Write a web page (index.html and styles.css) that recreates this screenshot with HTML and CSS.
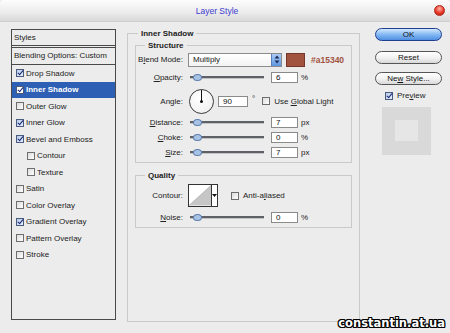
FILE: index.html
```html
<!DOCTYPE html>
<html lang="en">
<head>
    <meta charset="UTF-8">
    <meta name="viewport" content="width=device-width, initial-scale=1.0">
    <title>Layer Style</title>
    <link rel="stylesheet" href="styles.css">
</head>
<body>
<div class="window">
    <div class="titlebar">
        <span class="title">Layer Style</span>
        <span class="close"></span>
    </div>

    <div class="dialog">
        <div class="styles-panel">
            <div class="panel-head">Styles</div>
            <div class="panel-blend">Blending Options: Custom</div>
            <ul class="style-list">
                <li><span class="cb on"></span>Drop Shadow</li>
                <li class="active"><span class="cb on"></span>Inner Shadow</li>
                <li><span class="cb"></span>Outer Glow</li>
                <li><span class="cb on"></span>Inner Glow</li>
                <li><span class="cb on"></span>Bevel and Emboss</li>
                <li class="sub"><span class="cb"></span>Contour</li>
                <li class="sub"><span class="cb"></span>Texture</li>
                <li><span class="cb"></span>Satin</li>
                <li><span class="cb"></span>Color Overlay</li>
                <li><span class="cb on"></span>Gradient Overlay</li>
                <li><span class="cb"></span>Pattern Overlay</li>
                <li><span class="cb"></span>Stroke</li>
            </ul>
        </div>

        <fieldset class="group main-group">
            <legend>Inner Shadow</legend>

            <fieldset class="group inner-group structure">
                <legend>Structure</legend>
                <div class="row row-blend">
                    <span class="lbl">B<u>l</u>end Mode:</span>
                    <div class="select">
                        <span class="select-text">Multiply</span>
                        <span class="spin">
                            <svg width="6" height="9" viewBox="0 0 6 9"><path d="M3 0.5L5.5 3.5H0.5Z M3 8.5L5.5 5.5H0.5Z" fill="#1d2a55"/></svg>
                        </span>
                    </div>
                    <span class="swatch"></span>
                    <span class="hex">#a15340</span>
                </div>
                <div class="row row-opacity">
                    <span class="lbl"><u>O</u>pacity:</span>
                    <span class="slider"></span>
                    <span class="num">6</span>
                    <span class="unit">%</span>
                </div>
                <div class="row row-angle">
                    <span class="lbl">Angle:</span>
                    <span class="dial"></span>
                    <span class="num wide">90</span>
                    <span class="deg">°</span>
                    <span class="cb global"></span>
                    <span class="cb-text">Use <u>G</u>lobal Light</span>
                </div>
                <div class="row row-small">
                    <span class="lbl"><u>D</u>istance:</span>
                    <span class="slider"></span>
                    <span class="num">7</span>
                    <span class="unit">px</span>
                </div>
                <div class="row row-small">
                    <span class="lbl"><u>C</u>hoke:</span>
                    <span class="slider"></span>
                    <span class="num">0</span>
                    <span class="unit">%</span>
                </div>
                <div class="row row-small">
                    <span class="lbl"><u>S</u>ize:</span>
                    <span class="slider"></span>
                    <span class="num">7</span>
                    <span class="unit">px</span>
                </div>
            </fieldset>

            <fieldset class="group inner-group quality">
                <legend>Quality</legend>
                <div class="row row-contour">
                    <span class="lbl">Contour:</span>
                    <div class="contour">
                        <svg class="curve" width="23" height="21" viewBox="0 0 23 21">
                            <rect width="23" height="21" fill="#fff"/>
                            <polygon points="0,21 23,0 23,21" fill="#c6c6c6"/>
                            <line x1="0" y1="21" x2="23" y2="0" stroke="#9a9a9a" stroke-width="0.6"/>
                        </svg>
                        <span class="contour-arrow">
                            <svg width="5" height="3" viewBox="0 0 5 3"><path d="M0 0H5L2.5 3Z" fill="#111"/></svg>
                        </span>
                    </div>
                    <span class="cb anti"></span>
                    <span class="cb-text">Anti-a<u>l</u>iased</span>
                </div>
                <div class="row row-noise">
                    <span class="lbl"><u>N</u>oise:</span>
                    <span class="slider"></span>
                    <span class="num">0</span>
                    <span class="unit">%</span>
                </div>
            </fieldset>
        </fieldset>

        <div class="actions">
            <div class="btn btn-ok">OK</div>
            <div class="btn btn-reset">Reset</div>
            <div class="btn btn-new">Ne<u>w</u> Style...</div>
            <div class="preview-check"><span class="cb on"></span><span>Pre<u>v</u>iew</span></div>
            <div class="preview-box"><span class="preview-swatch"></span></div>
        </div>
    </div>

    <div class="watermark">constantin.at.ua</div>
</div>
</body>
</html>
```

FILE: styles.css
```css
* {
    box-sizing: border-box;
}
body {
    margin: 0;
    background: #ececec;
    font-family: "Liberation Sans", Arial, sans-serif;
    font-size: 8px;
    color: #222;
}
.window {
    position: relative;
    width: 450px;
    height: 333px;
    overflow: hidden;
    background: #ececec;
}

/* title bar */
.titlebar {
    height: 22px;
    display: flex;
    align-items: center;
    background: linear-gradient(#fdfdfd, #ededed 55%, #d9d9d9);
    border-bottom: 1px solid #cfcfcf;
    border-radius: 4px 4px 0 0;
}
.title {
    flex: 1;
    text-align: center;
    color: #3c3ccf;
    font-size: 8.5px;
}
.close {
    width: 11px;
    height: 11px;
    margin-right: 5px;
    border-radius: 50%;
    border: 1px solid #b02418;
    background: radial-gradient(circle at 50% 30%, #ffb4a8, #e8392a 55%, #b01a10);
}

.dialog {
    display: flex;
    align-items: flex-start;
    padding-left: 11px;
}

/* styles list */
.styles-panel {
    margin-top: 7px;
    width: 105px;
    height: 291px;
    border: 1px solid #4a4a4a;
}
.panel-head {
    height: 16px;
    line-height: 15px;
    padding-left: 2px;
    border-bottom: 1px solid #4a4a4a;
}
.panel-blend {
    margin-top: 1px;
    height: 18px;
    line-height: 16px;
    padding-left: 2px;
    border-top: 1px solid #4a4a4a;
    border-bottom: 1px solid #4a4a4a;
}
.style-list {
    list-style: none;
    margin: 0;
    padding: 0;
}
.style-list li {
    height: 16.5px;
    display: flex;
    align-items: center;
    padding-left: 4px;
}
.style-list li.sub {
    padding-left: 15px;
}
.style-list li.active {
    background: #2d5fb5;
    color: #fff;
    font-weight: bold;
}
.style-list .cb {
    margin-right: 2px;
}

/* checkboxes */
.cb {
    position: relative;
    display: inline-block;
    flex: none;
    width: 8px;
    height: 8px;
    border: 1px solid #6e6e6e;
    background: linear-gradient(135deg, #dcdcdc, #fff);
}
.cb.on {
    background: linear-gradient(135deg, #b9c9e8, #e6eefb);
    border-color: #4b5b7e;
}
.cb.on::after {
    content: "";
    position: absolute;
    left: 2px;
    top: -1px;
    width: 2px;
    height: 5px;
    border: solid #16297a;
    border-width: 0 1.5px 1.5px 0;
    transform: rotate(40deg);
}
.active .cb.on {
    background: #fff;
}

/* group boxes */
.group {
    margin: 0;
    padding: 0;
    min-width: 0;
    border: 1px solid #cacaca;
}
.group legend {
    font-weight: bold;
    line-height: 11px;
    padding: 0 3px;
    color: #222;
}
.main-group {
    margin-top: 5.5px;
    margin-left: 11px;
    width: 233px;
    height: 294.5px;
}
.main-group > legend {
    margin-left: 10px;
}
.inner-group {
    margin: 0 7px;
}
.inner-group > legend {
    margin-left: 9px;
}
.structure {
    margin-top: 1px;
    padding-bottom: 2px;
}
.quality {
    margin-top: 7px;
}

.row {
    display: flex;
    align-items: center;
}
.lbl {
    width: 47px;
    text-align: right;
    flex: none;
}
.row-blend {
    margin-top: 2px;
    height: 14px;
}
.row-opacity {
    height: 21px;
}
.row-angle {
    height: 27px;
}
.row-small {
    height: 15px;
}
.row-contour {
    margin-top: 3px;
    height: 24px;
}
.row-noise {
    height: 19px;
}

/* controls */
.select {
    margin-left: 5px;
    width: 94px;
    height: 14px;
    display: flex;
    border: 1px solid #8c8c8c;
    background: linear-gradient(#fff, #f3f3f3);
}
.select-text {
    flex: 1;
    line-height: 12px;
    padding-left: 4px;
}
.spin {
    width: 10px;
    display: flex;
    align-items: center;
    justify-content: center;
    border-left: 1px solid #5a7fb8;
    background: linear-gradient(#a9ccf5, #5d95e0);
}
.swatch {
    margin-left: 4px;
    width: 19px;
    height: 14px;
    background: #a15340;
    border: 1px solid #74372a;
}
.hex {
    margin-left: 6px;
    font-weight: bold;
    font-size: 8.5px;
    color: #a15340;
}

.slider {
    position: relative;
    margin-left: 7px;
    width: 74px;
    height: 3px;
    background: #5e6166;
    border-bottom: 1px solid #c4c4c4;
}
.slider::before {
    content: "";
    position: absolute;
    left: 3px;
    top: -2px;
    width: 7px;
    height: 5px;
    border-radius: 50%;
    border: 1px solid #5f7fae;
    background: #a9c3e6;
}

.num {
    margin-left: 7px;
    width: 27px;
    height: 11px;
    line-height: 9px;
    padding-left: 4px;
    border: 1px solid #8a8a8a;
    background: #fff;
    color: #111;
}
.num.wide {
    margin-left: 4px;
    width: 30px;
}
.unit {
    margin-left: 3px;
}
.deg {
    margin-left: 4px;
    align-self: flex-start;
    margin-top: 6px;
}

.dial {
    position: relative;
    margin-left: 6px;
    width: 25px;
    height: 25px;
    border-radius: 50%;
    border: 1px solid #3a3a3a;
    background: radial-gradient(circle at 40% 35%, #fff, #f2f2f2 70%, #dcdcdc);
}
.dial::before {
    content: "";
    position: absolute;
    left: 11px;
    top: 0;
    width: 1px;
    height: 12px;
    background: #111;
}
.dial::after {
    content: "";
    position: absolute;
    left: 10px;
    top: 10.5px;
    width: 3px;
    height: 3px;
    border-radius: 50%;
    background: #111;
}

.cb.global {
    margin-left: 7px;
}
.cb.anti {
    margin-left: 13px;
}
.cb-text {
    margin-left: 4px;
}

.contour {
    margin-left: 5px;
    width: 30px;
    height: 23px;
    display: flex;
    border: 1px solid #333;
    background: #fff;
}
.curve {
    display: block;
}
.contour-arrow {
    flex: 1;
    display: flex;
    align-items: center;
    justify-content: center;
    border-left: 1px solid #333;
    background: #fff;
}

/* buttons column */
.actions {
    margin-left: 15px;
    margin-top: 6px;
    width: 67px;
    display: flex;
    flex-direction: column;
}
.btn {
    height: 13px;
    line-height: 11px;
    text-align: center;
    border: 1px solid #555;
    border-radius: 7px;
    background: linear-gradient(#fff, #f1f1f1 55%, #d8d8d8);
    color: #111;
}
.btn-ok {
    border-color: #1e3f8e;
    background: linear-gradient(#d3e8ff, #85b9f3 50%, #4f8ee3);
}
.btn-reset {
    margin-top: 10px;
}
.btn-new {
    margin-top: 8px;
}
.preview-check {
    margin-top: 6px;
    margin-left: 10px;
    display: flex;
    align-items: center;
    gap: 4px;
}
.preview-box {
    margin-top: 7px;
    margin-left: 7px;
    width: 49px;
    height: 48px;
    display: flex;
    align-items: center;
    justify-content: center;
    background: #d9d9d9;
}
.preview-swatch {
    width: 23px;
    height: 21px;
    margin-bottom: 2px;
    background: #e6e6e6;
}

.watermark {
    position: absolute;
    right: 5px;
    bottom: 4px;
    font-family: "DejaVu Sans", sans-serif;
    font-weight: bold;
    font-size: 11.5px;
    line-height: 12px;
    color: #fff;
    text-shadow: 1px 0 #000, -1px 0 #000, 0 1px #000, 0 -1px #000,
        1px 1px #000, -1px -1px #000, 1px -1px #000, -1px 1px #000;
}
```
